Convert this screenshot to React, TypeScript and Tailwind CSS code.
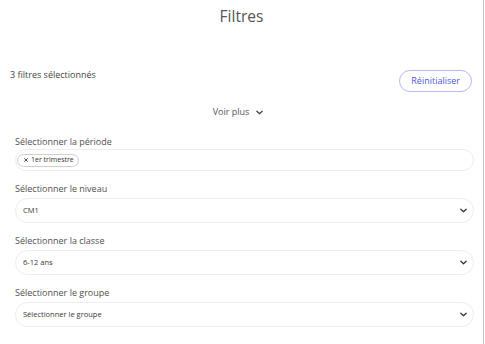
import { X } from 'lucide-react';

function Chevron({ className = '' }: { className?: string }) {
  return (
    <svg viewBox="0 0 10 6" className={className} fill="none">
      <path d="M1.2 1.2 5 4.8 8.8 1.2" stroke="currentColor" strokeWidth="1.8" strokeLinecap="round" strokeLinejoin="round" />
    </svg>
  );
}

interface SelectFieldProps {
  label: string;
  value: string;
}

function SelectField({ label, value }: SelectFieldProps) {
  return (
    <div className="flex flex-col">
      <label className="text-[9px] leading-[12px] text-[#4f4f4f] mb-[3px]">{label}</label>
      <div className="h-[25px] rounded-full border border-[#ededed] flex items-center justify-between pl-[7px] pr-[6px]">
        <span className="text-[7.5px] text-[#3a3a3a]">{value}</span>
        <Chevron className="w-[7px] h-[5px] text-[#333]" />
      </div>
    </div>
  );
}

export default function App() {
  const fields = [
    { id: 'niveau', label: 'Sélectionner le niveau', value: 'CM1' },
    { id: 'classe', label: 'Sélectionner la classe', value: '6-12 ans' },
    { id: 'groupe', label: 'Sélectionner le groupe', value: 'Sélectionner le groupe' },
  ];

  return (
    <div className="w-[484px] h-[344px] bg-white border-r border-[#c4c4c4] font-['Open_Sans',sans-serif] overflow-hidden">
      <h1 className="text-center text-[15.5px] leading-[20px] text-[#555] pt-[6px]">Filtres</h1>

      <div className="flex justify-between items-start pl-[10px] pr-[11px] mt-[43px]">
        <span className="text-[9px] leading-[12px] text-[#444]">3 filtres sélectionnés</span>
        <button className="h-[22px] mt-[1px] px-[11px] rounded-full border border-[#b6baf1] text-[9px] text-[#4a58d6]">
          Réinitialiser
        </button>
      </div>

      <div className="flex justify-center items-center gap-[7px] mt-[14px] mr-[7px]">
        <span className="text-[9px] leading-[12px] text-[#555]">Voir plus</span>
        <Chevron className="w-[7px] h-[5px] text-[#444]" />
      </div>

      <div className="flex flex-col gap-[12px] pl-[15px] pr-[9px] mt-[18px]">
        <div className="flex flex-col">
          <label className="text-[9px] leading-[12px] text-[#4f4f4f] mb-[1px]">Sélectionner la période</label>
          <div className="h-[22px] rounded-full border border-[#ededed] flex items-center pl-[1px]">
            <span className="flex items-center gap-[2px] h-[13px] rounded-full border border-[#cfcfcf] pl-[5px] pr-[4px] text-[7px] text-[#333]">
              <X className="w-[6px] h-[6px]" strokeWidth={3.5} />
              1er trimestre
            </span>
          </div>
        </div>
        {fields.map((f) => (
          <SelectField key={f.id} label={f.label} value={f.value} />
        ))}
      </div>
    </div>
  );
}
